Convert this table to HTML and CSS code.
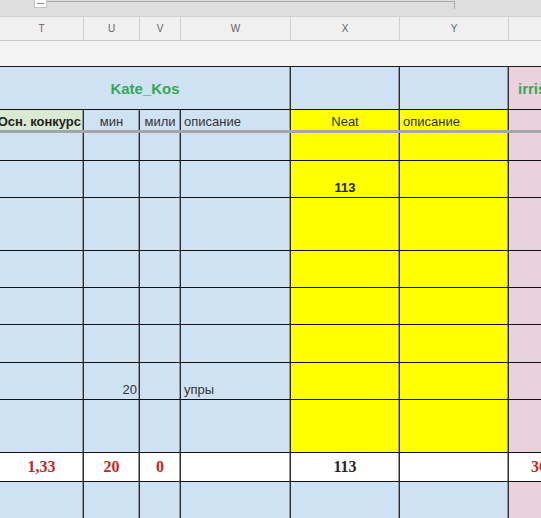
FILE: index.html
```html
<!DOCTYPE html>
<html>
<head>
<meta charset="utf-8">
<link rel="stylesheet" href="styles.css">
</head>
<body>
<div class="page">
  <div class="strip">
    <div class="grp-btn"><span class="grp-minus"></span></div>
    <div class="grp-line"></div>
  </div>
  <div class="colhead">
    <div class="ch w-t">T</div>
    <div class="ch w-u">U</div>
    <div class="ch w-v">V</div>
    <div class="ch w-w">W</div>
    <div class="ch w-x">X</div>
    <div class="ch w-y">Y</div>
    <div class="ch w-z"></div>
  </div>
  <div class="gap-area"></div>
  <div class="sheet">
    <!-- row 1 -->
    <div class="c blue mid span4 title">Kate_Kos</div>
    <div class="c blue"></div>
    <div class="c blue"></div>
    <div class="c pink mid title irris">irris</div>
    <!-- row 2 -->
    <div class="c grn right nob bold">Осн. конкурс</div>
    <div class="c blue center nob">мин</div>
    <div class="c blue center nob">мили</div>
    <div class="c blue nob">описание</div>
    <div class="c yel center nob">Neat</div>
    <div class="c yel nob">описание</div>
    <div class="c pink nob"></div>
    <!-- frozen separator -->
    <div class="sep"></div>
    <!-- row 3 -->
    <div class="c blue"></div><div class="c blue"></div><div class="c blue"></div><div class="c blue"></div><div class="c yel"></div><div class="c yel"></div><div class="c pink"></div>
    <!-- row 4 -->
    <div class="c blue"></div><div class="c blue"></div><div class="c blue"></div><div class="c blue"></div><div class="c yel center bold">113</div><div class="c yel"></div><div class="c pink"></div>
    <!-- row 5 -->
    <div class="c blue"></div><div class="c blue"></div><div class="c blue"></div><div class="c blue"></div><div class="c yel"></div><div class="c yel"></div><div class="c pink"></div>
    <!-- row 6 -->
    <div class="c blue"></div><div class="c blue"></div><div class="c blue"></div><div class="c blue"></div><div class="c yel"></div><div class="c yel"></div><div class="c pink"></div>
    <!-- row 7 -->
    <div class="c blue"></div><div class="c blue"></div><div class="c blue"></div><div class="c blue"></div><div class="c yel"></div><div class="c yel"></div><div class="c pink"></div>
    <!-- row 8 -->
    <div class="c blue"></div><div class="c blue"></div><div class="c blue"></div><div class="c blue"></div><div class="c yel"></div><div class="c yel"></div><div class="c pink"></div>
    <!-- row 9 -->
    <div class="c blue"></div><div class="c blue right">20</div><div class="c blue"></div><div class="c blue">упры</div><div class="c yel"></div><div class="c yel"></div><div class="c pink"></div>
    <!-- row 10 -->
    <div class="c blue"></div><div class="c blue"></div><div class="c blue"></div><div class="c blue"></div><div class="c yel"></div><div class="c yel"></div><div class="c pink"></div>
    <!-- row 11 -->
    <div class="c white center num red">1,33</div>
    <div class="c white center num red">20</div>
    <div class="c white center num red">0</div>
    <div class="c white"></div>
    <div class="c white center num">113</div>
    <div class="c white"></div>
    <div class="c white num red zval">36</div>
    <!-- row 12 -->
    <div class="c blue"></div><div class="c blue"></div><div class="c blue"></div><div class="c blue"></div><div class="c blue"></div><div class="c blue"></div><div class="c pink"></div>
  </div>
</div>
</body>
</html>
```
FILE: styles.css
```css
* { box-sizing: border-box; }
html, body { margin: 0; padding: 0; }
body {
  width: 541px;
  height: 518px;
  overflow: hidden;
  background: #ffffff;
  font-family: "Liberation Sans", Arial, sans-serif;
}
.page { width: 541px; overflow: hidden; }

.strip {
  height: 16px;
  background: #dedede;
  display: flex;
  align-items: flex-start;
  padding-left: 34px;
}
.grp-btn {
  width: 13px;
  height: 8px;
  background: #ffffff;
  border: 1px solid #c4c4c4;
  border-top: none;
  display: flex;
  align-items: center;
  justify-content: center;
}
.grp-minus { width: 7px; height: 1px; background: #888; }
.grp-line {
  width: 408px;
  height: 8px;
  margin-top: 1px;
  border-top: 1px solid #a8a8a8;
  border-right: 1px solid #a8a8a8;
}

.colhead {
  display: flex;
  height: 25px;
  background: #f0f0f0;
  border-top: 1px solid #d2d2d2;
  border-bottom: 1px solid #c8c8c8;
}
.ch {
  flex: none;
  display: flex;
  align-items: center;
  justify-content: center;
  font-size: 10px;
  color: #5f6368;
  border-right: 1px solid #d0d0d0;
}
.w-t { width: 84px; }
.w-u { width: 56px; }
.w-v { width: 41px; }
.w-w { width: 110px; }
.w-x { width: 109px; }
.w-y { width: 109px; }
.w-z { flex: 1; border-right: none; }

.gap-area { height: 25px; background: #f3f3f3; }

.sheet {
  display: grid;
  grid-template-columns: 84px 56px 41px 110px 109px 109px 100px;
  grid-template-rows: 43px 20px 3px 28px 37px 53px 37px 37px 38px 37px 53px 29px 40px;
  border-top: 1px solid #1e1e1e;
  width: 609px;
}
.c {
  border-right: 1px solid #2e2e2e;
  border-bottom: 1px solid #111111;
  box-shadow: inset -1px 0 0 #8f98a2;
  display: flex;
  align-items: flex-end;
  padding: 0 3px 2px 3px;
  font-size: 13px;
  line-height: 15px;
  color: #333333;
  white-space: nowrap;
  overflow: hidden;
}
.nob { border-bottom: none; padding-bottom: 1px; }
.blue { background: #cfe2f3; }
.yel { background: #ffff00; }
.pink { background: #ead1dc; }
.grn { background: #d9ead3; }
.white { background: #ffffff; }
.mid { align-items: center; padding-bottom: 0; }
.center { justify-content: center; }
.right { justify-content: flex-end; padding-right: 2px; }
.bold { font-weight: bold; color: #222; }
.span4 { grid-column: span 4; }
.title {
  justify-content: center;
  font-size: 15px;
  line-height: 17px;
  font-weight: bold;
  color: #34a853;
}
.irris { justify-content: flex-start; padding-left: 9px; }
.sep { grid-column: 1 / -1; background: #a3a5a8; }
.num {
  font-family: "Liberation Serif", "Times New Roman", serif;
  font-weight: bold;
  font-size: 16px;
  line-height: 18px;
  padding-bottom: 5px;
  color: #262626;
}
.red { color: #cc1f1f; }
.zval { padding-left: 22px; }
```
